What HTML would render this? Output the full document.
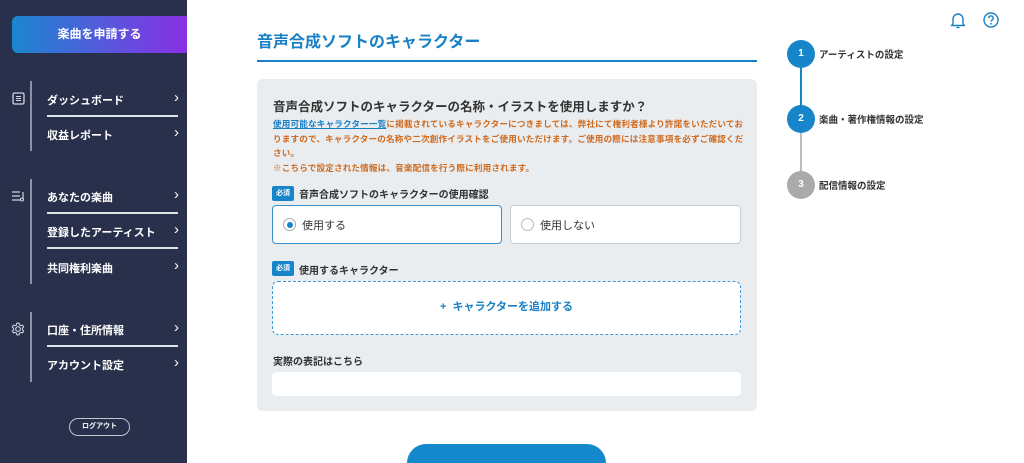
<!DOCTYPE html>
<html style="width:1024px;height:463px;overflow:hidden"><head><meta charset="utf-8"><style>
*{margin:0;padding:0;box-sizing:border-box}
body{width:1024px;height:463px;overflow:hidden;background:#fff;font-family:"Liberation Sans","Noto Sans CJK JP",sans-serif;position:relative;color:#333}
.a{position:absolute}
.side{left:0;top:0;width:187px;height:463px;background:#28304b}
.btn{left:12px;top:16px;width:175px;height:37px;border-radius:6px 0 0 6px;background:linear-gradient(90deg,#1b87d1,#8a2fe4);color:#fff;font-size:12px;font-weight:bold;text-align:center;line-height:37px}
.vl{width:2px;background:#8d93a3;left:30px}
.it{left:47px;color:#fff;font-size:11px;font-weight:bold;width:132px}
.it:after{content:"›";position:absolute;right:0;top:-3px;font-size:15px;font-weight:normal}
.dv{left:47px;width:131px;height:2px;background:#dfe2e8}
.t{white-space:nowrap}
.badge{background:#1785c9;color:#fff;font-size:7px;font-weight:bold;width:22px;height:15px;line-height:15px;text-align:center;border-radius:2px}
.circ{width:28px;height:28px;border-radius:50%;color:#fff;font-weight:bold;font-size:10px;text-align:center;line-height:28px;left:787px}
.st{left:819px;font-size:9.5px;font-weight:bold;color:#333}
</style></head><body>
<div class="a side"></div>
<div class="a btn">楽曲を申請する</div>
<div class="a vl" style="top:81px;height:70px"></div>
<div class="a vl" style="top:179px;height:105px"></div>
<div class="a vl" style="top:312px;height:70px"></div>
<svg class="a" style="left:12px;top:92px" width="13" height="13" viewBox="0 0 13 13"><rect x="1" y="1" width="11" height="11" rx="1.5" fill="none" stroke="#d0d4dc" stroke-width="1.3"/><path d="M4 4.5h5M4 6.5h5M4 8.5h5" stroke="#d0d4dc" stroke-width="1.1"/></svg>
<svg class="a" style="left:11px;top:190px" width="15" height="12" viewBox="0 0 15 12"><path d="M1 2h8M1 6h8M1 10h8" stroke="#d0d4dc" stroke-width="1.2"/><path d="M12 2v7" stroke="#d0d4dc" stroke-width="1.2"/><circle cx="11" cy="9.5" r="1.5" fill="none" stroke="#d0d4dc" stroke-width="1.1"/></svg>
<svg class="a" style="left:11px;top:322px" width="14" height="14" viewBox="0 0 24 24"><path d="M12 8a4 4 0 1 0 0 8 4 4 0 0 0 0-8z" fill="none" stroke="#d0d4dc" stroke-width="2"/><path d="M10 2h4l.6 3 2.3 1.3 2.9-1 2 3.4-2.3 2v2.6l2.3 2-2 3.4-2.9-1-2.3 1.3-.6 3h-4l-.6-3-2.3-1.3-2.9 1-2-3.4 2.3-2v-2.6l-2.3-2 2-3.4 2.9 1L9.4 5z" fill="none" stroke="#d0d4dc" stroke-width="1.8" stroke-linejoin="round"/></svg>
<div class="a it t" style="top:92px">ダッシュボード</div>
<div class="a dv" style="top:115px"></div>
<div class="a it t" style="top:127px">収益レポート</div>
<div class="a it t" style="top:189px">あなたの楽曲</div>
<div class="a dv" style="top:212px"></div>
<div class="a it t" style="top:224px">登録したアーティスト</div>
<div class="a dv" style="top:247px"></div>
<div class="a it t" style="top:260px">共同権利楽曲</div>
<div class="a it t" style="top:322px">口座・住所情報</div>
<div class="a dv" style="top:345px"></div>
<div class="a it t" style="top:357px">アカウント設定</div>
<div class="a" style="left:69px;top:418px;width:61px;height:18px;border:1.5px solid #bfc4ce;border-radius:9px;color:#fff;font-size:7px;font-weight:bold;text-align:center;line-height:15px">ログアウト</div>

<div class="a t" style="left:257px;top:28px;font-size:16px;font-weight:bold;color:#1a80c6">音声合成ソフトのキャラクター</div>
<div class="a" style="left:257px;top:60px;width:500px;height:2px;background:#1a80c6"></div>
<div class="a" style="left:257px;top:79px;width:500px;height:332px;background:#e9edf0;border-radius:6px"></div>
<div class="a t" style="left:273px;top:96px;font-size:12.5px;font-weight:bold;color:#333">音声合成ソフトのキャラクターの名称・イラストを使用しますか？</div>
<div class="a" style="left:273px;top:117px;width:472px;font-size:8.6px;font-weight:bold;color:#cf6a1e;line-height:14.5px;letter-spacing:0.15px"><span style="color:#1a80c6;text-decoration:underline">使用可能なキャラクター一覧</span>に掲載されているキャラクターにつきましては、弊社にて権利者様より許諾をいただいておりますので、キャラクターの名称や二次創作イラストをご使用いただけます。ご使用の際には注意事項を必ずご確認ください。<br>※こちらで設定された情報は、音楽配信を行う際に利用されます。</div>
<div class="a badge" style="left:272px;top:186px">必須</div>
<div class="a t" style="left:299px;top:186px;font-size:10px;font-weight:bold">音声合成ソフトのキャラクターの使用確認</div>
<div class="a" style="left:272px;top:205px;width:230px;height:39px;background:#fff;border:1.5px solid #3b8fcc;border-radius:4px"></div>
<div class="a" style="left:510px;top:205px;width:231px;height:39px;background:#fff;border:1px solid #c8ccd0;border-radius:4px"></div>
<div class="a" style="left:283px;top:218px;width:13px;height:13px;border:1px solid #aaa;border-radius:50%;background:#fff"></div>
<div class="a" style="left:286.5px;top:221.5px;width:6px;height:6px;border-radius:50%;background:#1785c9"></div>
<div class="a t" style="left:302px;top:217px;font-size:11px">使用する</div>
<div class="a" style="left:521px;top:218px;width:13px;height:13px;border:1px solid #bbb;border-radius:50%;background:#fff"></div>
<div class="a t" style="left:540px;top:217px;font-size:11px">使用しない</div>
<div class="a badge" style="left:272px;top:261px">必須</div>
<div class="a t" style="left:299px;top:262px;font-size:10px;font-weight:bold">使用するキャラクター</div>
<div class="a" style="left:272px;top:281px;width:469px;height:54px;background:#fff;border:1.5px dashed #3a9ad8;border-radius:6px;color:#1a80c6;font-size:11px;font-weight:bold;text-align:center;line-height:51px">+&nbsp; キャラクターを追加する</div>
<div class="a t" style="left:273px;top:353px;font-size:10px;font-weight:bold">実際の表記はこちら</div>
<div class="a" style="left:272px;top:372px;width:469px;height:24px;background:#fff;border-radius:4px"></div>
<div class="a" style="left:407px;top:444px;width:199px;height:19px;background:#1588cc;border-radius:25px 25px 0 0"></div>

<svg class="a" style="left:950px;top:12px" width="16" height="17" viewBox="0 0 16 17"><path d="M3 12V7a5 5 0 0 1 10 0v5l1.5 1.5h-13z" fill="none" stroke="#1a80c6" stroke-width="1.4" stroke-linejoin="round"/><path d="M6.5 15.5h3" stroke="#1a80c6" stroke-width="1.4"/></svg>
<svg class="a" style="left:983px;top:12px" width="16" height="16" viewBox="0 0 16 16"><circle cx="8" cy="8" r="7" fill="none" stroke="#1a80c6" stroke-width="1.4"/><path d="M5.8 6.2a2.2 2.2 0 1 1 3 2c-.6.3-.8.7-.8 1.3" fill="none" stroke="#1a80c6" stroke-width="1.4"/><circle cx="8" cy="11.8" r=".9" fill="#1a80c6"/></svg>
<div class="a" style="left:800px;top:66px;width:2px;height:40px;background:#1785c9"></div>
<div class="a" style="left:800px;top:132px;width:2px;height:40px;background:#bbb"></div>
<div class="a circ" style="top:40px;background:#1785c9">1</div>
<div class="a circ" style="top:105px;background:#1785c9">2</div>
<div class="a circ" style="top:171px;background:#aaa">3</div>
<div class="a st t" style="top:47px">アーティストの設定</div>
<div class="a st t" style="top:112px">楽曲・著作権情報の設定</div>
<div class="a st t" style="top:178px">配信情報の設定</div>
</body></html>
